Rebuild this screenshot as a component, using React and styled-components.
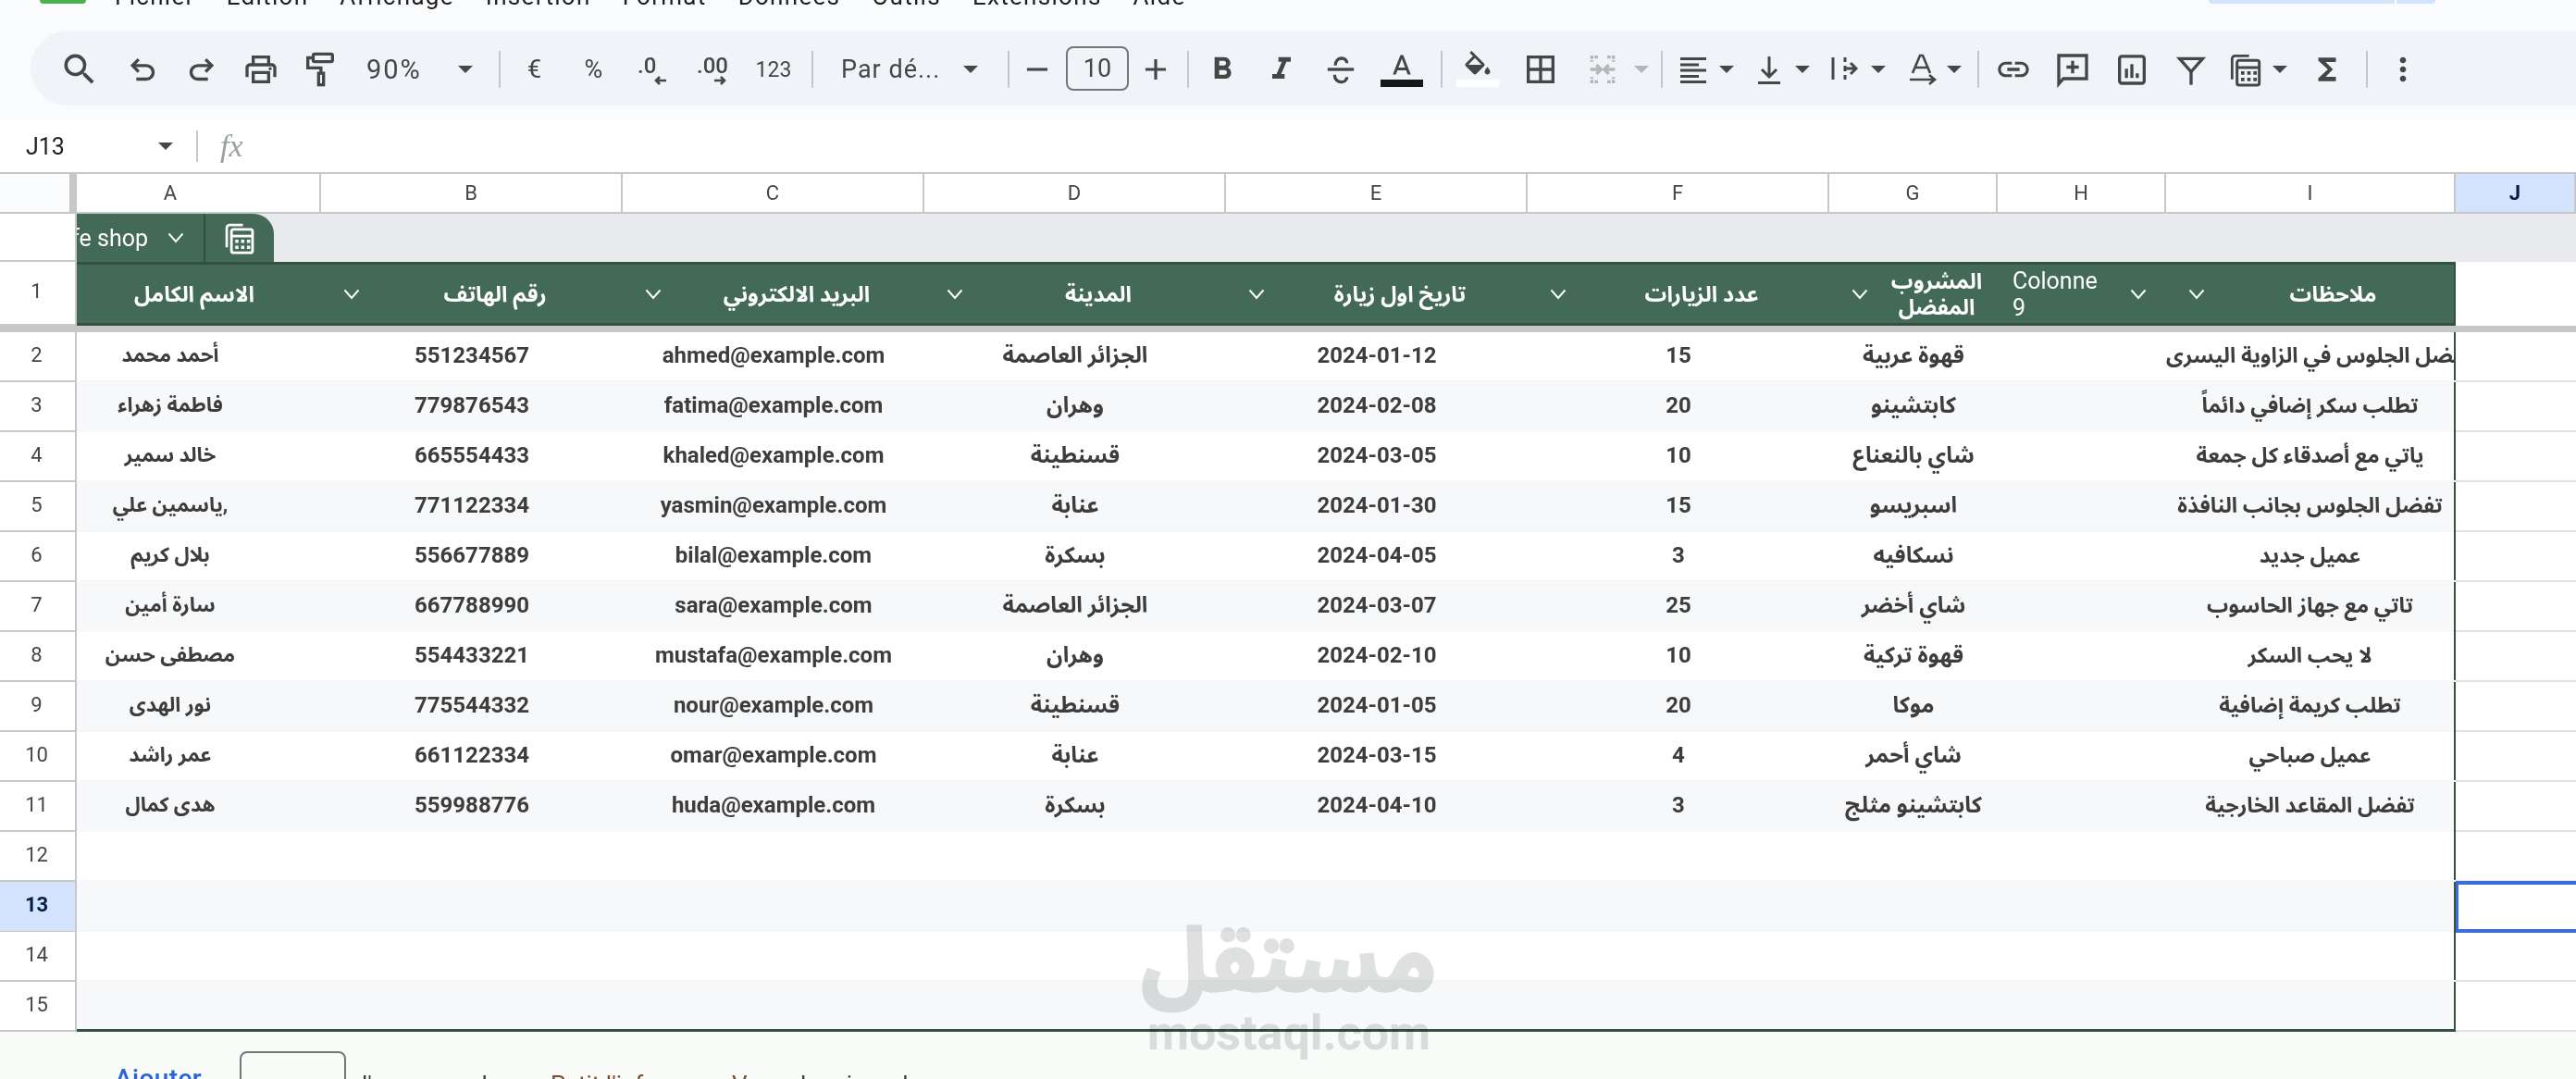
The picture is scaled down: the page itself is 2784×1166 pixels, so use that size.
import React from "react";
import styled, { createGlobalStyle } from "styled-components";

const COLS = "83px 264px 326px 326px 326px 326px 326px 182px 182px 313px 130px";
const LETTERS = ["A", "B", "C", "D", "E", "F", "G", "H", "I", "J"];
const MENU = ["Fichier", "Edition", "Affichage", "Insertion", "Format", "Données", "Outils", "Extensions", "Aide"];

const HEADERS = [
  "رقم الهاتف",
  "البريد الالكتروني",
  "المدينة",
  "تاريخ اول زيارة",
  "عدد الزيارات",
];

const ROWS = [
  ["أحمد محمد", "551234567", "ahmed@example.com", "الجزائر العاصمة", "2024-01-12", "15", "قهوة عربية", "يفضل الجلوس في الزاوية اليسرى"],
  ["فاطمة زهراء", "779876543", "fatima@example.com", "وهران", "2024-02-08", "20", "كابتشينو", "تطلب سكر إضافي دائماً"],
  ["خالد سمير", "665554433", "khaled@example.com", "قسنطينة", "2024-03-05", "10", "شاي بالنعناع", "ياتي مع أصدقاء كل جمعة"],
  ["ياسمين علي,", "771122334", "yasmin@example.com", "عنابة", "2024-01-30", "15", "اسبريسو", "تفضل الجلوس بجانب النافذة"],
  ["بلال كريم", "556677889", "bilal@example.com", "بسكرة", "2024-04-05", "3", "نسكافيه", "عميل جديد"],
  ["سارة أمين", "667788990", "sara@example.com", "الجزائر العاصمة", "2024-03-07", "25", "شاي أخضر", "تاتي مع جهاز الحاسوب"],
  ["مصطفى حسن", "554433221", "mustafa@example.com", "وهران", "2024-02-10", "10", "قهوة تركية", "لا يحب السكر"],
  ["نور الهدى", "775544332", "nour@example.com", "قسنطينة", "2024-01-05", "20", "موكا", "تطلب كريمة إضافية"],
  ["عمر راشد", "661122334", "omar@example.com", "عنابة", "2024-03-15", "4", "شاي أحمر", "عميل صباحي"],
  ["هدى كمال", "559988776", "huda@example.com", "بسكرة", "2024-04-10", "3", "كابتشينو مثلج", "تفضل المقاعد الخارجية"],
];

const Icon = ({ size = 40, d, children, vb = 24 }) => (
  <svg width={size} height={size} viewBox={`0 0 ${vb} ${vb}`} fill="#444746">
    {d && <path d={d} />}
    {children}
  </svg>
);

const Stroke = ({ children, color = "#444746", width = 2 }) => (
  <svg width="40" height="40" viewBox="0 0 24 24" fill="none" stroke={color} strokeWidth={width}>
    {children}
  </svg>
);

const Chevron = ({ color = "#fff" }) => (
  <svg width="18" height="12" viewBox="0 0 18 12" fill="none" stroke={color} strokeWidth="2" style={{ flex: "none" }}>
    <path d="M1.5 1.5 9 10l7.5-8.5" />
  </svg>
);

const CalcIcon = ({ color = "#444746", size = 40 }) => (
  <svg width={size} height={size} viewBox="0 0 24 24" fill="none">
    <path d="M3.2 18.5V5.2a2 2 0 0 1 2-2h9" stroke={color} strokeWidth="1.7" />
    <rect x="6.4" y="6.2" width="14.4" height="16" rx="1.4" stroke={color} strokeWidth="1.8" />
    <path d="M6.4 10.8h14.4" stroke={color} strokeWidth="1.8" />
    <path d="M9 13.2h2.2v2.2H9zm4 0h2.2v2.2H13zm4 0h2.2v2.2H17zM9 17.4h2.2v2.2H9zm4 0h2.2v2.2H13zm4 0h2.2v2.2H17z" fill={color} />
  </svg>
);

const App = () => {
  return (
    <Page>
      <GlobalStyle />
      <MenuBar>
        <Logo />
        <MenuList>
          {MENU.map((m) => (
            <MenuItem key={m}>{m}</MenuItem>
          ))}
        </MenuList>
        <ShareButton />
      </MenuBar>

      <ToolbarWrap>
        <Toolbar>
          <Btn $w={64}>
            <Icon size={44} d="M15.5 14h-.79l-.28-.27A6.471 6.471 0 0 0 16 9.5 6.5 6.5 0 1 0 9.5 16c1.61 0 3.09-.59 4.23-1.57l.27.28v.79l5 4.99L20.49 19l-4.99-5zm-6 0C7.01 14 5 11.99 5 9.5S7.01 5 9.5 5 14 7.01 14 9.5 11.99 14 9.5 14z" />
          </Btn>
          <Btn $w={64} $ml={4}>
            <Stroke>
              <path d="M9.5 5.5 5.5 9.5l4 4" />
              <path d="M5.5 9.5h9a4.2 4.2 0 0 1 0 8.8H8" />
            </Stroke>
          </Btn>
          <Btn $w={64}>
            <Stroke>
              <path d="M14.5 5.5l4 4-4 4" />
              <path d="M18.5 9.5h-9a4.2 4.2 0 0 0 0 8.8H16" />
            </Stroke>
          </Btn>
          <Btn $w={64}>
            <Icon d="M19 8h-1V3H6v5H5c-1.66 0-3 1.34-3 3v6h4v4h12v-4h4v-6c0-1.66-1.34-3-3-3zM8 5h8v3H8V5zm8 14H8v-4h8v4zm2-2v-4H6v4H4v-6c0-.55.45-1 1-1h14c.55 0 1 .45 1 1v6h-2z">
              <circle cx="18" cy="11.5" r="1" />
            </Icon>
          </Btn>
          <Btn $w={64}>
            <Stroke>
              <rect x="7.5" y="2" width="12.5" height="5" rx="1" />
              <path d="M7.5 4.5H4V11h8.5v3.5" />
              <rect x="11" y="14.5" width="3.2" height="7.5" />
            </Stroke>
          </Btn>
          <Select $w={146} $pl={18} $pr={13}>
            <ZoomText>90%</ZoomText>
            <Caret />
          </Select>
          <Divider $ml={15} />
          <Btn $w={64} $ml={5}>
            <ToolText>€</ToolText>
          </Btn>
          <Btn $w={64}>
            <ToolText>%</ToolText>
          </Btn>
          <Btn $w={64}>
            <svg width="48" height="48" viewBox="0 0 48 48">
              <text x="7" y="28" fontFamily="Roboto, sans-serif" fontWeight="500" fontSize="24" fill="#444746">.0</text>
              <path d="M38 36H27m4-4-4 4 4 4" fill="none" stroke="#444746" strokeWidth="2.6" />
            </svg>
          </Btn>
          <Btn $w={64}>
            <svg width="48" height="48" viewBox="0 0 48 48">
              <text x="7" y="28" fontFamily="Roboto, sans-serif" fontWeight="500" fontSize="24" fill="#444746">.00</text>
              <path d="M26 36h11m-4-4 4 4-4 4" fill="none" stroke="#444746" strokeWidth="2.6" />
            </svg>
          </Btn>
          <Btn $w={68}>
            <SmallText>123</SmallText>
          </Btn>
          <Divider $ml={7} />
          <Select $w={205} $pl={30} $pr={27} $ml={0}>
            <ToolText>Par dé...</ToolText>
            <Caret />
          </Select>
          <Divider $ml={5} />
          <Btn $w={60}>
            <Icon size={38} d="M19 13H5v-2h14v2z" />
          </Btn>
          <SizeBox>10</SizeBox>
          <Btn $w={58}>
            <Icon size={38} d="M19 13h-6v6h-2v-6H5v-2h6V5h2v6h6v2z" />
          </Btn>
          <Divider $ml={5} />
          <Btn $w={64} $ml={4}>
            <Icon d="M15.6 10.79c.97-.67 1.65-1.77 1.65-2.79 0-2.26-1.75-4-4-4H7v14h7.04c2.09 0 3.71-1.7 3.71-3.79 0-1.52-.86-2.82-2.15-3.42zM10 6.5h3c.83 0 1.5.67 1.5 1.5s-.67 1.5-1.5 1.5h-3v-3zm3.5 9H10v-3h3.5c.83 0 1.5.67 1.5 1.5s-.67 1.5-1.5 1.5z" />
          </Btn>
          <Btn $w={64}>
            <Icon d="M10 4v3h2.21l-3.42 8H6v3h8v-3h-2.21l3.42-8H18V4z" />
          </Btn>
          <Btn $w={64}>
            <Stroke>
              <path d="M3.5 12h17" />
              <path d="M8.5 9.5c0-6 7.5-6 7.5-1.5M8 15.5c0 6 8 6 8 1.5" />
            </Stroke>
          </Btn>
          <ColorBtn $w={64} $ml={2} $bar="#17171a">
            <Icon size={36} d="M11 3 5.5 17h2.25l1.12-3h6.25l1.12 3h2.25L13 3h-2zm-1.38 9L12 5.67 14.38 12H9.62z" />
          </ColorBtn>
          <Divider $ml={10} />
          <ColorBtn $w={64} $ml={6} $bar="#fff">
            <Icon size={36} d="M16.56 8.94 7.62 0 6.21 1.41l2.38 2.38-5.15 5.15c-.59.59-.59 1.54 0 2.12l5.5 5.5c.29.29.68.44 1.06.44s.77-.15 1.06-.44l5.5-5.5c.59-.58.59-1.53 0-2.12zM5.21 10 10 5.21 14.79 10H5.21zM19 11.5s-2 2.17-2 3.5c0 1.1.9 2 2 2s2-.9 2-2c0-1.33-2-3.5-2-3.5z">
              <path d="M5.21 10h9.58L10 15z" />
            </Icon>
          </ColorBtn>
          <Btn $w={64} $ml={4}>
            <Icon d="M3 3v18h18V3H3zm8 16H5v-6h6v6zm0-8H5V5h6v6zm8 8h-6v-6h6v6zm0-8h-6V5h6v6z" />
          </Btn>
          <Btn $w={64} $ml={3}>
            <Stroke color="#b4b6b8">
              <path d="M9 4H5v3M15 4h4v3M9 20H5v-3M15 20h4v-3" strokeDasharray="2.2 .8" />
              <path d="M4 12h6.5M8 9l3 3-3 3M20 12h-6.5M16 9l-3 3 3 3" />
            </Stroke>
          </Btn>
          <CaretBox $w={20}>
            <Caret $muted />
          </CaretBox>
          <Divider $ml={11} />
          <Btn $w={56} $ml={5}>
            <svg width="40" height="40" viewBox="0 0 40 40" fill="#444746">
              <path d="M6 7h28v3H6zM6 13.5h20v3H6zM6 19.5h28v3H6zM6 26h20v3H6zM6 32h28v3H6z" />
            </svg>
          </Btn>
          <CaretBox $w={16}>
            <Caret />
          </CaretBox>
          <Btn $w={56} $ml={10}>
            <svg width="40" height="40" viewBox="0 0 40 40" fill="none" stroke="#444746" strokeWidth="3">
              <path d="M20 6v22M12 20l8 8 8-8" />
              <path d="M8 34.5h24" />
            </svg>
          </Btn>
          <CaretBox $w={16}>
            <Caret />
          </CaretBox>
          <Btn $w={56} $ml={9}>
            <svg width="40" height="40" viewBox="0 0 40 40" fill="none" stroke="#444746" strokeWidth="3">
              <path d="M8 7v24M21 7v5M21 16v6M21 26v5" />
              <path d="M21 19h11M27 13l6 6-6 6" />
            </svg>
          </Btn>
          <CaretBox $w={18}>
            <Caret />
          </CaretBox>
          <Btn $w={56} $ml={10}>
            <svg width="40" height="40" viewBox="0 0 40 40" fill="none" stroke="#444746" strokeWidth="2.6">
              <path d="M10 24 18 5h3l8 19M13 18h13" />
              <path d="M7 31h26M28 26l6 5-6 5" />
            </svg>
          </Btn>
          <CaretBox $w={14}>
            <Caret />
          </CaretBox>
          <Divider $ml={18} />
          <Btn $w={64} $ml={5}>
            <Icon d="M3.9 12c0-1.71 1.39-3.1 3.1-3.1h4V7H7c-2.76 0-5 2.24-5 5s2.24 5 5 5h4v-1.9H7c-1.71 0-3.1-1.39-3.1-3.1zM8 13h8v-2H8v2zm9-6h-4v1.9h4c1.71 0 3.1 1.39 3.1 3.1s-1.39 3.1-3.1 3.1h-4V17h4c2.76 0 5-2.24 5-5s-2.24-5-5-5z" />
          </Btn>
          <Btn $w={64}>
            <Stroke>
              <path d="M3 3h18v15H6l-3 3.4z" />
              <path d="M12 6.5v8M8 10.5h8" />
            </Stroke>
          </Btn>
          <Btn $w={64}>
            <Stroke>
              <rect x="4" y="3.5" width="16" height="17.5" rx="1.5" />
              <path d="M8.5 11.5v6M12 8.5v9M15.5 14.5v3" />
            </Stroke>
          </Btn>
          <Btn $w={64}>
            <Stroke>
              <path d="M4.5 5h15L12 13.5z" />
              <path d="M12 13v9" />
            </Stroke>
          </Btn>
          <Btn $w={54}>
            <CalcIcon />
          </Btn>
          <CaretBox $w={20}>
            <Caret />
          </CaretBox>
          <Btn $w={64} $ml={9}>
            <Icon size={38} d="M18 4H6v2l6.5 6L6 18v2h12v-3h-7l5-5-5-5h7z" />
          </Btn>
          <Divider $ml={10} />
          <Btn $w={64} $ml={6}>
            <Icon d="M12 8c1.1 0 2-.9 2-2s-.9-2-2-2-2 .9-2 2 .9 2 2 2zm0 2c-1.1 0-2 .9-2 2s.9 2 2 2 2-.9 2-2-.9-2-2-2zm0 6c-1.1 0-2 .9-2 2s.9 2 2 2 2-.9 2-2-.9-2-2-2z" />
          </Btn>
        </Toolbar>
      </ToolbarWrap>

      <FormulaBar>
        <NameBox>J13</NameBox>
        <Caret />
        <FormulaDivider />
        <FxLabel>fx</FxLabel>
      </FormulaBar>

      <Sheet>
        <LetterRow>
          <Corner />
          {LETTERS.map((l) => (
            <Letter key={l} $active={l === "J"}>
              {l}
            </Letter>
          ))}
        </LetterRow>

        <TabRow>
          <TabHead />
          <TableTab>
            <TabName>
              <TabLabel>Cafe shop</TabLabel>
              <Chevron />
            </TabName>
            <TabIcon>
              <CalcIcon color="#fff" size={38} />
            </TabIcon>
          </TableTab>
        </TabRow>

        <HeaderRow>
          <RowHead>1</RowHead>
          <HeaderCell $first>
            <HeaderText $first>الاسم الكامل</HeaderText>
          </HeaderCell>
          {HEADERS.map((h) => (
            <HeaderCell key={h}>
              <Chevron />
              <HeaderText>{h}</HeaderText>
            </HeaderCell>
          ))}
          <HeaderCell>
            <Chevron />
            <HeaderText>
              المشروب
              <br />
              المفضل
            </HeaderText>
          </HeaderCell>
          <LatinHeaderCell>
            <span>
              Colonne
              <br />9
            </span>
            <Chevron />
          </LatinHeaderCell>
          <HeaderCell $last>
            <Chevron />
            <HeaderText>ملاحظات</HeaderText>
          </HeaderCell>
          <BlankHead />
        </HeaderRow>
        <FreezeBar />

        {ROWS.map((row, i) => (
          <Row key={row[1]}>
            <RowHead>{i + 2}</RowHead>
            <Cell $banded={i % 2 === 1} $name $size={22}>
              {row[0]}
            </Cell>
            {row.slice(1, 6).map((v, c) => (
              <Cell key={c} $banded={i % 2 === 1}>
                {v}
              </Cell>
            ))}
            <Cell $banded={i % 2 === 1}>{row[6]}</Cell>
            <Cell $banded={i % 2 === 1} />
            <Cell $banded={i % 2 === 1} $last $size={23}>
              <CellText>{row[7]}</CellText>
            </Cell>
            <Blank />
          </Row>
        ))}

        {[12, 13, 14, 15].map((n) => (
          <Row key={n}>
            <RowHead $active={n === 13}>{n}</RowHead>
            {Array.from({ length: 9 }).map((_, c) => (
              <Cell key={c} $banded={n % 2 === 1} $last={c === 8} $bottom={n === 15} />
            ))}
            {n === 13 ? <SelectedCell /> : <Blank />}
          </Row>
        ))}
      </Sheet>

      <Footer>
        <AddLink>Ajouter</AddLink>
        <RowsInput />
        <FooterText $w={204}>l'annonces la</FooterText>
        <FooterNote $w={196}>Petit l'info</FooterNote>
        <FooterNote $w={74}>Vo</FooterNote>
        <FooterText>la mise a la norme</FooterText>
      </Footer>

      <Watermark>
        <WatermarkLogo>مستقل</WatermarkLogo>
        <WatermarkSite>mostaql.com</WatermarkSite>
      </Watermark>
    </Page>
  );
};

export default App;

const GlobalStyle = createGlobalStyle`
  html, body {
    margin: 0;
    padding: 0;
    background: #fff;
  }
  body {
    font-family: Roboto, "Liberation Sans", "DejaVu Sans", sans-serif;
    color: #444746;
  }
`;

const Page = styled.div`
  position: relative;
  width: 2784px;
  height: 1166px;
  overflow: hidden;
  background: #f9fbfd;
  display: flex;
  flex-direction: column;
`;

const MenuBar = styled.div`
  flex: none;
  height: 34px;
  display: flex;
  align-items: flex-start;
  overflow: hidden;
  padding-left: 43px;
`;

const Logo = styled.div`
  width: 50px;
  height: 4px;
  background: #4caf50;
  border-radius: 0 0 5px 5px;
`;

const MenuList = styled.div`
  display: flex;
  gap: 34px;
  margin: -19px 0 0 31px;
  width: 1157px;
`;

const MenuItem = styled.span`
  font-size: 26px;
  line-height: 30px;
  letter-spacing: 1.3px;
  color: #1f1f1f;
`;

const ShareButton = styled.div`
  width: 245px;
  height: 4px;
  margin-left: auto;
  margin-right: 152px;
  background: linear-gradient(90deg, #d3e3fd 0 201px, #fff 201px 203px, #d3e3fd 203px);
  border-radius: 0 0 16px 16px;
`;

const ToolbarWrap = styled.div`
  flex: none;
  height: 96px;
  padding-left: 33px;
`;

const Toolbar = styled.div`
  box-sizing: border-box;
  height: 80px;
  padding: 2px 0 0 21px;
  background: #f0f4f9;
  border-radius: 40px 0 0 40px;
  display: flex;
  align-items: center;
`;

const Btn = styled.div`
  flex: none;
  width: ${(p) => p.$w}px;
  margin-left: ${(p) => p.$ml || 0}px;
  display: flex;
  justify-content: center;
  align-items: center;
`;

const ColorBtn = styled(Btn)`
  position: relative;
  height: 60px;
  align-items: flex-start;
  padding-top: 10px;
  box-sizing: border-box;

  &::after {
    content: "";
    position: absolute;
    left: 9px;
    bottom: 11px;
    width: 46px;
    height: 8px;
    background: ${(p) => p.$bar};
  }
`;

const CaretBox = styled.div`
  flex: none;
  width: ${(p) => p.$w}px;
  display: flex;
  justify-content: center;
`;

const Caret = styled.span`
  flex: none;
  width: 0;
  height: 0;
  border-left: 8px solid transparent;
  border-right: 8px solid transparent;
  border-top: 8px solid ${(p) => (p.$muted ? "#b4b6b8" : "#444746")};
`;

const Select = styled.div`
  flex: none;
  box-sizing: border-box;
  width: ${(p) => p.$w}px;
  padding: 0 ${(p) => p.$pr}px 0 ${(p) => p.$pl}px;
  display: flex;
  justify-content: space-between;
  align-items: center;
`;

const ToolText = styled.span`
  font-size: 27px;
  letter-spacing: 1px;
  color: #444746;
`;

const ZoomText = styled(ToolText)`
  font-size: 29px;
  letter-spacing: 2px;
`;

const SmallText = styled.span`
  font-size: 23px;
  color: #444746;
`;

const Divider = styled.div`
  flex: none;
  width: 2px;
  height: 40px;
  margin-left: ${(p) => p.$ml || 0}px;
  background: #c7c7c7;
`;

const SizeBox = styled.div`
  flex: none;
  box-sizing: border-box;
  width: 68px;
  height: 48px;
  margin: -3px 0 0 1px;
  border: 2px solid #747775;
  border-radius: 8px;
  font-size: 27px;
  display: flex;
  justify-content: center;
  align-items: center;
`;

const FormulaBar = styled.div`
  flex: none;
  box-sizing: border-box;
  height: 56px;
  background: #fff;
  padding-left: 28px;
  display: flex;
  align-items: center;
`;

const NameBox = styled.span`
  width: 143px;
  font-size: 25px;
  color: #1f1f1f;
`;

const FormulaDivider = styled.div`
  width: 2px;
  height: 34px;
  margin-left: 25px;
  background: #c7c7c7;
`;

const FxLabel = styled.span`
  margin-left: 24px;
  font-family: "Liberation Serif", serif;
  font-style: italic;
  font-size: 34px;
  color: #9aa0a0;
`;

const Sheet = styled.div`
  flex: none;
  background: #fff;
`;

const LetterRow = styled.div`
  display: grid;
  grid-template-columns: ${COLS};
  box-sizing: border-box;
  height: 45px;
  border-top: 2px solid #c7c7c7;
  border-bottom: 2px solid #c7c7c7;
`;

const Corner = styled.div`
  background: #f9fbfd;
  border-right: 8px solid #c7c7c7;
`;

const Letter = styled.div`
  display: flex;
  justify-content: center;
  align-items: center;
  font-size: 22px;
  font-weight: ${(p) => (p.$active ? 700 : 400)};
  color: ${(p) => (p.$active ? "#041e49" : "#444746")};
  background: ${(p) => (p.$active ? "#d3e3fd" : "#fff")};
  border-right: 2px solid #c7c7c7;

  &:nth-child(2) {
    padding-right: 60px;
  }
`;

const TabRow = styled.div`
  height: 52px;
  display: flex;
  background: #e8eaed;
`;

const TabHead = styled.div`
  box-sizing: border-box;
  width: 83px;
  background: #fff;
  border-right: 2px solid #c7c7c7;
  border-bottom: 2px solid #c7c7c7;
`;

const TableTab = styled.div`
  width: 213px;
  display: flex;
  background: #436a56;
  border-radius: 0 22px 0 0;
  color: #fff;
`;

const TabName = styled.div`
  box-sizing: border-box;
  width: 139px;
  padding-right: 21px;
  overflow: hidden;
  border-right: 2px solid #34503f;
  display: flex;
  justify-content: flex-end;
  align-items: center;
  gap: 21px;
  flex: none;
`;

const TabLabel = styled.span`
  flex: none;
  font-size: 25px;
  color: #fff;
`;

const TabIcon = styled.div`
  flex: 1;
  display: flex;
  justify-content: center;
  align-items: center;
`;

const Row = styled.div`
  display: grid;
  grid-template-columns: ${COLS};
  height: 54px;
`;

const HeaderRow = styled(Row)`
  height: 69px;
`;

const RowHead = styled.div`
  box-sizing: border-box;
  display: flex;
  justify-content: center;
  align-items: center;
  padding: 0 2px 4px 0;
  font-size: 22px;
  font-weight: ${(p) => (p.$active ? 700 : 400)};
  color: ${(p) => (p.$active ? "#041e49" : "#444746")};
  background: ${(p) => (p.$active ? "#d3e3fd" : "#fff")};
  border-right: 2px solid #c7c7c7;
  border-bottom: 2px solid #c7c7c7;
`;

const HeaderCell = styled.div`
  box-sizing: border-box;
  display: flex;
  align-items: center;
  padding-left: ${(p) => (p.$first ? 0 : 24)}px;
  background: #436a56;
  border-top: 3px solid #34503f;
  border-bottom: 3px solid #34503f;
  border-right: ${(p) => (p.$last ? "2px solid #34503f" : "none")};
  color: #fff;
`;

const LatinHeaderCell = styled(HeaderCell)`
  padding-left: 16px;
  gap: 32px;
  font-size: 25px;
  line-height: 29px;
  justify-content: space-between;
  padding-right: 21px;
`;

const arabicFont = `"Noto Sans Arabic", "Noto Naskh Arabic", Arial, "DejaVu Sans", sans-serif`;

const HeaderText = styled.div`
  flex: 1;
  text-align: center;
  padding-left: ${(p) => (p.$first ? 0 : 8)}px;
  padding-right: ${(p) => (p.$first ? 10 : 0)}px;
  font-family: Roboto, ${arabicFont};
  font-size: 23.5px;
  line-height: 28px;
  font-weight: 700;
  color: #fff;
`;

const BlankHead = styled.div`
  background: #fff;
`;

const FreezeBar = styled.div`
  height: 7px;
  background: #c7c7c7;
`;

const Cell = styled.div`
  box-sizing: border-box;
  min-width: 0;
  overflow: hidden;
  display: flex;
  justify-content: safe center;
  align-items: center;
  padding-bottom: 4px;
  padding-right: ${(p) => (p.$name ? 62 : 0)}px;
  white-space: nowrap;
  font-family: Roboto, ${arabicFont};
  font-size: ${(p) => p.$size || 24}px;
  font-weight: 700;
  color: #3d3d3d;
  background: ${(p) => (p.$banded ? "#f6f8f9" : "#fff")};
  box-shadow: ${(p) => (p.$banded ? "0 -2px 0 #f6f8f9" : "none")};
  border-right: ${(p) => (p.$last ? "2px solid #34503f" : "none")};
  border-bottom: ${(p) => (p.$bottom ? "3px solid #34503f" : "none")};
`;

const CellText = styled.span`
  flex: none;
`;

const Blank = styled.div`
  background: #fff;
  border-bottom: 2px solid #e1e1e1;
`;

const SelectedCell = styled.div`
  box-sizing: border-box;
  height: 56px;
  margin-top: -1px;
  position: relative;
  background: #fff;
  border: 4px solid #3b6dd9;
  border-left-width: 3px;
  border-right: none;
`;

const Footer = styled.div`
  flex: 1;
  min-height: 0;
  overflow: hidden;
  box-sizing: border-box;
  display: flex;
  align-items: flex-start;
  padding: 21px 0 0 124px;
  background: #f9fbf9;
`;

const AddLink = styled.span`
  flex: none;
  width: 94px;
  margin-top: 13px;
  font-size: 28px;
  font-weight: 500;
  letter-spacing: 0.4px;
  color: #2a64d8;
`;

const RowsInput = styled.div`
  flex: none;
  box-sizing: border-box;
  width: 115px;
  height: 60px;
  margin: 0 17px 0 41px;
  border: 2px solid #747775;
  border-radius: 8px;
`;

const FooterText = styled.span`
  flex: none;
  width: ${(p) => (p.$w ? `${p.$w}px` : "auto")};
  margin-top: 21px;
  font-size: 26px;
  white-space: nowrap;
  color: #3d3d3d;
`;

const FooterNote = styled(FooterText)`
  color: #7d4a2c;
`;

const Watermark = styled.div`
  position: absolute;
  left: 1240px;
  top: 985px;
  width: 306px;
  display: flex;
  flex-direction: column;
  align-items: center;
  pointer-events: none;
  mix-blend-mode: multiply;
  color: #dfe0e0;
`;

const WatermarkLogo = styled.div`
  font-family: ${arabicFont};
  font-size: 96px;
  line-height: 112px;
  font-weight: 700;
  -webkit-text-stroke: 3px #dfe0e0;
`;

const WatermarkSite = styled.div`
  margin-top: -8px;
  font-size: 52px;
  line-height: 56px;
  font-weight: 700;
`;
